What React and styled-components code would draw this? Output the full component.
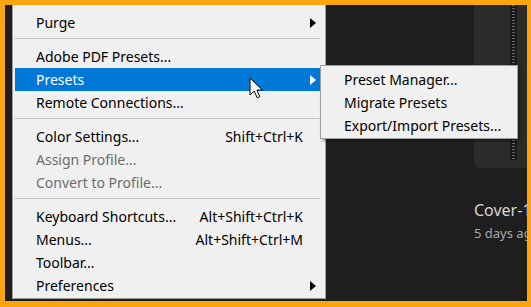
import React from "react";
import styled, { createGlobalStyle } from "styled-components";

const Global = createGlobalStyle`
  html, body {
    margin: 0;
    padding: 0;
    background: #1e1e1e;
  }
`;

const Frame = styled.div`
  box-sizing: border-box;
  width: 531px;
  height: 307px;
  border-style: solid;
  border-color: #fba510;
  border-width: 5px 4px 6px 5px;
  background: #1e1e1e;
  overflow: hidden;
`;

const Stage = styled.div`
  position: relative;
  width: 100%;
  height: 100%;
  overflow: hidden;
`;

const Gallery = styled.div`
  display: flex;
  padding-left: 469px;
  height: 100%;
`;

const DocCard = styled.div`
  display: flex;
  flex-direction: column;
  flex: 0 0 200px;
`;

const Thumb = styled.div`
  height: 163px;
  background: #2b2b2b;
  border-radius: 0 0 6px 6px;
`;

const Ruler = styled.div`
  margin-left: 36px;
  width: 7px;
  height: 155px;
  background-color: #1a1a1a;
  background-image: repeating-linear-gradient(
    to bottom,
    #6a6a6a 0 1px,
    transparent 1px 3px
  );
  background-size: 3px 100%;
  background-repeat: no-repeat;
  background-position: 2px 0;
`;

const DocTitle = styled.div`
  margin-top: 32px;
  font-family: "Noto Sans", "Open Sans", sans-serif;
  font-size: 16px;
  line-height: 20px;
  color: #d6d6d6;
  white-space: nowrap;
`;

const DocMeta = styled.div`
  margin-top: 4px;
  font-family: "Noto Sans", "Open Sans", sans-serif;
  font-size: 13px;
  line-height: 18px;
  color: #a9a9a9;
  white-space: nowrap;
`;

const Menu = styled.div`
  position: absolute;
  top: ${(p) => p.$top}px;
  left: ${(p) => p.$left}px;
  width: ${(p) => p.$width}px;
  box-sizing: border-box;
  padding: ${(p) => p.$pad};
  background: #f0f0f0;
  border: 1px solid #a0a0a0;
  box-shadow: ${(p) => (p.$sub ? "2px 2px 3px rgba(0,0,0,0.35)" : "none")};
  font-family: "Noto Sans", "Open Sans", sans-serif;
  font-size: 14px;
  color: #000;
  z-index: ${(p) => (p.$sub ? 3 : 1)};
`;

const Row = styled.div`
  display: grid;
  grid-template-columns: 1fr auto 17px;
  align-items: center;
  height: 23px;
  padding-left: 21px;
  background: ${(p) => (p.$active ? "#0078d7" : "transparent")};
  color: ${(p) => (p.$active ? "#fff" : p.$disabled ? "#6d6d6d" : "#000")};
  white-space: nowrap;
  line-height: 23px;
`;

const Shortcut = styled.span`
  text-align: right;
`;

const Arrow = styled.span`
  width: 0;
  height: 0;
  margin-left: 7px;
  border-top: 5px solid transparent;
  border-bottom: 5px solid transparent;
  border-left: 6px solid ${(p) => (p.$active ? "#fff" : "#000")};
`;

const Separator = styled.div`
  height: 1px;
  margin: 4px 0 6px;
  background: #c4c4c4;
`;

const Pointer = styled.svg`
  position: absolute;
  left: 244px;
  top: 72px;
  z-index: 4;
`;

const main = [
  { label: "Purge", sub: true },
  "sep",
  { label: "Adobe PDF Presets..." },
  { label: "Presets", sub: true, active: true },
  { label: "Remote Connections..." },
  "sep",
  { label: "Color Settings...", key: "Shift+Ctrl+K" },
  { label: "Assign Profile...", disabled: true },
  { label: "Convert to Profile...", disabled: true },
  "sep",
  { label: "Keyboard Shortcuts...", key: "Alt+Shift+Ctrl+K" },
  { label: "Menus...", key: "Alt+Shift+Ctrl+M" },
  { label: "Toolbar..." },
  { label: "Preferences", sub: true },
];

const presets = ["Preset Manager...", "Migrate Presets", "Export/Import Presets..."];

function Item({ item }) {
  return (
    <Row $active={item.active} $disabled={item.disabled}>
      <span>{item.label}</span>
      <Shortcut>{item.key || ""}</Shortcut>
      {item.sub ? <Arrow $active={item.active} /> : <span />}
    </Row>
  );
}

export default function App() {
  return (
    <>
      <Global />
      <Frame>
        <Stage>
          <Gallery>
            <DocCard>
              <Thumb>
                <Ruler />
              </Thumb>
              <DocTitle>Cover-1 Final</DocTitle>
              <DocMeta>5 days ago</DocMeta>
            </DocCard>
          </Gallery>

          <Menu $top={-4} $left={7} $width={314} $pad="9px 5px 1px 2px">
            {main.map((item, i) =>
              item === "sep" ? <Separator key={i} /> : <Item key={i} item={item} />
            )}
          </Menu>

          <Menu $sub $top={60} $left={315} $width={198} $pad="2px 2px 1px">
            {presets.map((p) => (
              <Item key={p} item={{ label: p }} />
            ))}
          </Menu>

          <Pointer width="15" height="23" viewBox="0 0 15 23">
            <path
              d="M1 1 L1 18 L5.2 14 L8.2 20.8 L10.8 19.7 L7.9 13 L13.4 13 Z"
              fill="#fff"
              stroke="#000"
              strokeWidth="1"
              strokeLinejoin="miter"
            />
          </Pointer>
        </Stage>
      </Frame>
    </>
  );
}
